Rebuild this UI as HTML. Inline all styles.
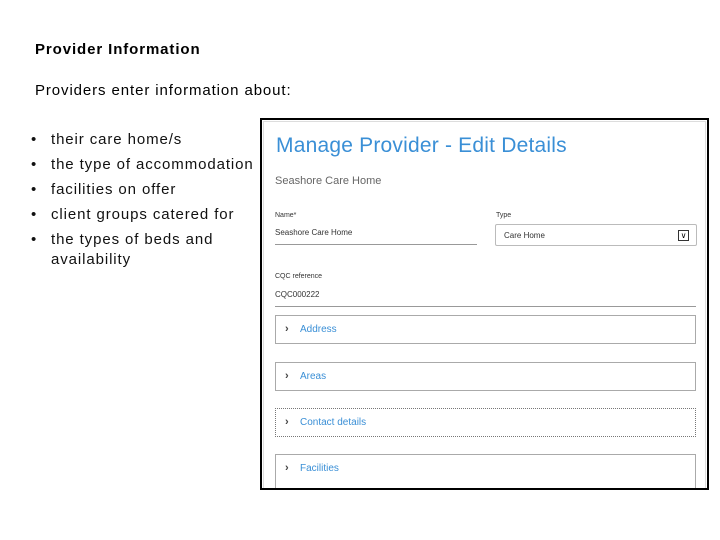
<!DOCTYPE html>
<html><head><meta charset="utf-8"><style>
body{margin:0;width:720px;height:540px;background:#fff;position:relative;overflow:hidden;font-family:"Liberation Sans",Arial,sans-serif}
.a{position:absolute;white-space:nowrap}
.h{left:35px;top:41px;font-size:15px;font-weight:bold;color:#000;letter-spacing:0.9px}
.p{left:35px;top:82px;font-size:15px;color:#000;letter-spacing:0.9px}
.li{left:31px;font-size:15px;color:#111;letter-spacing:0.9px}
.li span{display:inline-block;width:20px;letter-spacing:0}
.frame{position:absolute;left:260px;top:118px;width:445px;height:368px;border:2px solid #000;background:#fff;overflow:hidden}
.inner{position:absolute;left:1px;top:1px;right:1px;bottom:0;border:1px solid #ddd;border-bottom:none}
.blue{color:#3a8fd6}
.box{position:absolute;left:13px;width:419px;height:27px;border:1px solid #aaa;background:#fff}
.box .t{position:absolute;left:24px;top:8px;font-size:10px;color:#3a8fd6}
.box .c{position:absolute;left:9px;top:7px;font-size:11px;font-weight:bold;color:#444}
.s{font-size:8px;color:#333}
</style></head><body>
<div class="a h">Provider Information</div>
<div class="a p">Providers enter information about:</div>
<div class="a li" style="top:131px"><span>•</span>their care home/s</div>
<div class="a li" style="top:156px"><span>•</span>the type of accommodation</div>
<div class="a li" style="top:181px"><span>•</span>facilities on offer</div>
<div class="a li" style="top:206px"><span>•</span>client groups catered for</div>
<div class="a li" style="top:231px"><span>•</span>the types of beds and</div>
<div class="a li" style="top:251px"><span></span>availability</div>
<div class="frame"><div class="inner"></div>
<div class="a blue" style="left:14px;top:14px;font-size:21px;letter-spacing:0.2px">Manage Provider - Edit Details</div>
<div class="a" style="left:13px;top:55px;font-size:11px;color:#666">Seashore Care Home</div>
<div class="a s" style="left:13px;top:92px;font-size:7px">Name*</div>
<div class="a s" style="left:13px;top:108px">Seashore Care Home</div>
<div style="position:absolute;left:13px;top:124px;width:202px;border-top:1px solid #999"></div>
<div class="a s" style="left:234px;top:92px;font-size:7px">Type</div>
<div style="position:absolute;left:233px;top:104px;width:200px;height:20px;border:1px solid #bbb;border-radius:2px"></div>
<div class="a s" style="left:242px;top:111px">Care Home</div>
<div style="position:absolute;left:416px;top:110px;width:9px;height:9px;border:1px solid #333;font-size:8px;line-height:9px;text-align:center">&#x2228;</div>
<div class="a s" style="left:13px;top:153px;font-size:7px">CQC reference</div>
<div class="a s" style="left:13px;top:170px">CQC000222</div>
<div style="position:absolute;left:13px;top:186px;width:421px;border-top:1px solid #999"></div>
<div class="box" style="top:195px"><span class="c">›</span><span class="t">Address</span></div>
<div class="box" style="top:242px"><span class="c">›</span><span class="t">Areas</span></div>
<div class="box" style="top:288px;border-style:dotted;border-color:#777"><span class="c">›</span><span class="t">Contact details</span></div>
<div class="box" style="top:334px;height:40px;border-bottom:none"><span class="c">›</span><span class="t">Facilities</span></div>
</div>
</body></html>
